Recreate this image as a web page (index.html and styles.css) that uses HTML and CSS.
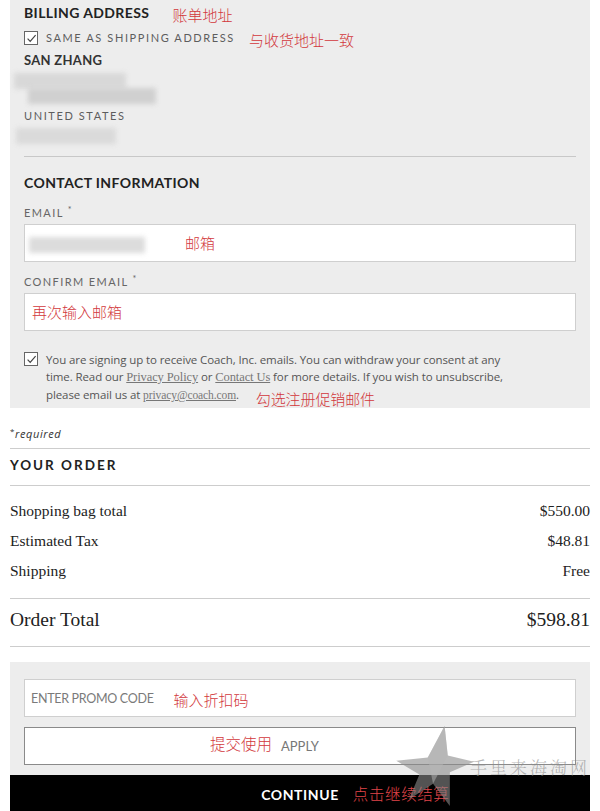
FILE: index.html
```html
<!DOCTYPE html>
<html lang="en">
<head>
<meta charset="utf-8">
<title>Checkout</title>
<link rel="stylesheet" href="styles.css">
</head>
<body>
<div class="page">
  <section class="panel billing">
    <div class="title-row">
      <h2 class="sec-title">BILLING ADDRESS</h2>
      <span class="note note-billing">账单地址</span>
    </div>
    <div class="check-row">
      <span class="box"><svg viewBox="0 0 13 13" width="13" height="13"><path d="M2.6 6.6 L5.2 9.4 L10.6 3.2" fill="none" stroke="#444" stroke-width="1.2"/></svg></span>
      <span class="small-caps">SAME AS SHIPPING ADDRESS</span>
      <span class="note note-same">与收货地址一致</span>
    </div>
    <div class="name">SAN ZHANG</div>
    <div class="blur-area">
      <div class="blob b1"></div>
      <div class="blob b2"></div>
    </div>
    <div class="small-caps country">UNITED STATES</div>
    <div class="blur-area short">
      <div class="blob b3"></div>
    </div>
    <hr class="divider">
    <h2 class="sec-title contact">CONTACT INFORMATION</h2>
    <div class="label">EMAIL <sup>*</sup></div>
    <div class="field">
      <div class="blob b-email"></div>
      <span class="note note-email">邮箱</span>
    </div>
    <div class="label">CONFIRM EMAIL <sup>*</sup></div>
    <div class="field">
      <span class="note note-confirm">再次输入邮箱</span>
    </div>
    <div class="consent">
      <span class="box"><svg viewBox="0 0 13 13" width="13" height="13"><path d="M2.6 6.6 L5.2 9.4 L10.6 3.2" fill="none" stroke="#444" stroke-width="1.2"/></svg></span>
      <p class="consent-text">You are signing up to receive Coach, Inc. emails. You can withdraw your consent at any<br>time. Read our <a href="#" class="serif-link">Privacy Policy</a> or <a href="#" class="serif-link">Contact Us</a> for more details. If you wish to unsubscribe,<br>please email us at <a href="#" class="serif-link small">privacy@coach.com</a>. <span class="note note-consent">勾选注册促销邮件</span></p>
    </div>
  </section>

  <div class="required"><sup>*</sup>required</div>
  <hr class="rule">
  <h3 class="order-title">YOUR ORDER</h3>
  <hr class="rule">
  <div class="summary">
    <div class="row"><span>Shopping bag total</span><span>$550.00</span></div>
    <div class="row"><span>Estimated Tax</span><span>$48.81</span></div>
    <div class="row"><span>Shipping</span><span>Free</span></div>
  </div>
  <hr class="rule">
  <div class="row total"><span>Order Total</span><span>$598.81</span></div>
  <hr class="rule">

  <section class="panel promo">
    <div class="promo-field">
      <span class="placeholder">ENTER PROMO CODE</span>
      <span class="note note-promo">输入折扣码</span>
    </div>
    <button class="apply"><span class="btn-label">APPLY<span class="note note-apply">提交使用</span></span></button>
  </section>
  <button class="continue"><span class="btn-label">CONTINUE<span class="note note-continue">点击继续结算</span></span></button>

  <div class="watermark">
    <svg class="wm-star" viewBox="0 0 80 80" width="84" height="84"><path d="M52 2 L55 30 L80 36 L57 46 L57 78 L41 57 L18 72 L28 48 L6 35 L36 32 Z" fill="#8a8a8a" opacity="0.6"/><path d="M52 2 L55 30 L41 57 L36 32 Z" fill="#b5b5b5" opacity="0.5"/></svg>
    <span class="wm-text">手里来海淘网</span>
  </div>
</div>
</body>
</html>
```

FILE: styles.css
```css
* { box-sizing: border-box; }
html, body { margin: 0; padding: 0; background: #fff; }
body { font-family: Lato, "Open Sans", sans-serif; color: #222; }
.page { position: relative; width: 600px; height: 811px; padding: 0 10px; overflow: hidden; }

.panel { background: #ededed; }
.billing { padding: 3px 14px 0; height: 408px; }

.note { font-family: "Noto Sans CJK SC", sans-serif; color: #d2383c; font-weight: 300; font-size: 15px; line-height: 20px; }

.title-row { display: flex; align-items: center; height: 20px; }
.sec-title { margin: 0; font-size: 14px; font-weight: 700; letter-spacing: 0.4px; line-height: 20px; color: #222; }
.note-billing { margin-left: 23px; position: relative; top: 2px; }

.check-row { display: flex; align-items: center; height: 20px; margin-top: 5px; }
.box { display: inline-block; width: 14px; height: 14px; border: 1px solid #666; background: #fff; flex: none; }
.box svg { display: block; margin: -0.5px 0 0 -0.5px; }
.small-caps { font-size: 11px; letter-spacing: 1.6px; color: #5d5d5d; line-height: 18px; }
.check-row .small-caps { margin-left: 8px; }
.note-same { margin-left: 14px; position: relative; top: 2px; }

.name { font-size: 13px; font-weight: 700; letter-spacing: 0.3px; line-height: 18px; margin-top: 3px; color: #333; }

.blur-area { position: relative; height: 38px; margin-left: -10px; }
.blur-area.short { height: 22px; }
.blob { position: absolute; background: #d6d6d6; filter: blur(2.5px); }
.b1 { left: 0; top: 4px; width: 112px; height: 16px; background: #d8d8d8; }
.b2 { left: 14px; top: 19px; width: 128px; height: 16px; background: #d0d0d0; }
.b3 { left: 2px; top: 3px; width: 100px; height: 16px; background: #dadada; }
.country { line-height: 18px; margin-top: 0; }

.divider { border: 0; border-top: 1px solid #c8c8c8; margin: 9px 0 0; }
.contact { margin-top: 16px; }
.label { font-size: 11px; letter-spacing: 1.4px; color: #666; margin-top: 12px; line-height: 16px; }
.label sup { font-size: 9px; vertical-align: 4px; line-height: 0; }
.label + .field { margin-top: 3px; }
.field { position: relative; height: 38px; background: #fff; border: 1px solid #cfcfcf; display: flex; align-items: center; }
.field + .label { margin-top: 12px; }
.b-email { left: 4px; top: 12px; width: 116px; height: 16px; background: #dcdcdc; }
.note-email { margin-left: 160px; }
.note-confirm { margin-left: 7px; }

.consent { display: flex; align-items: flex-start; margin-top: 20px; }
.consent .box { margin-top: 1px; margin-right: 8px; }
.consent-text { margin: 0; font-family: "Open Sans", sans-serif; font-size: 11.5px; line-height: 17px; color: #555; letter-spacing: -0.1px; }
.serif-link { font-family: "Liberation Serif", serif; color: #777; font-size: 12.5px; text-decoration: underline; }
.serif-link.small { font-size: 11.5px; }
.note-consent { margin-left: 14px; position: relative; top: 6px; line-height: 0; }

.required { font-size: 11px; font-style: italic; color: #333; letter-spacing: 0.6px; margin-top: 18px; line-height: 16px; font-family: "Open Sans", sans-serif; }
.required sup { font-size: 8px; font-style: normal; vertical-align: 4px; line-height: 0; }
.rule { border: 0; border-top: 1px solid #cdcdcd; margin: 0; }
.required + .rule { margin-top: 6px; }
.order-title { margin: 0; font-size: 13.5px; font-weight: 700; letter-spacing: 2px; line-height: 32px; height: 36px; color: #222; }

.summary { padding: 10px 0 12px; }
.row { display: flex; justify-content: space-between; font-family: "Liberation Serif", serif; font-size: 15.5px; line-height: 30px; color: #222; }
.total { font-size: 19.5px; line-height: 42px; padding-bottom: 5px; }

.promo { margin-top: 15px; height: 113px; padding: 17px 14px 0; }
.promo-field { height: 38px; background: #fff; border: 1px solid #cfcfcf; display: flex; align-items: center; padding-left: 6px; }
.placeholder { font-family: Lato, sans-serif; font-size: 12.5px; color: #7a7a7a; letter-spacing: -0.3px; }
.note-promo { margin-left: 20px; position: relative; top: 2px; }
.apply { display: flex; justify-content: center; align-items: center; width: 100%; height: 38px; margin-top: 10px; background: #fff; border: 1px solid #8a8a8a; padding: 0; cursor: pointer; }
.btn-label { position: relative; font-family: Lato, sans-serif; }
.apply .btn-label { font-size: 13px; color: #777; letter-spacing: 0; }
.note-apply { position: absolute; right: calc(100% + 9px); top: -5px; white-space: nowrap; font-size: 15.5px; }
.continue { display: flex; justify-content: center; align-items: center; width: 100%; height: 36px; background: #000; border: 0; padding: 0; cursor: pointer; }
.continue .btn-label { font-size: 14px; font-weight: 700; color: #fff; letter-spacing: 0.6px; top: 1px; }
.note-continue { position: absolute; left: calc(100% + 14px); top: -3px; white-space: nowrap; font-size: 15.5px; color: #e0454a; }

.watermark { position: absolute; left: 390px; top: 724px; width: 212px; height: 86px; pointer-events: none; }
.wm-star { position: absolute; left: 0; top: 0; }
.wm-text { position: absolute; left: 80px; top: 30px; font-family: "Noto Serif CJK SC", "Noto Sans CJK SC", serif; font-size: 17px; letter-spacing: 3px; color: rgba(140,140,140,0.65); font-weight: 300; }
```
